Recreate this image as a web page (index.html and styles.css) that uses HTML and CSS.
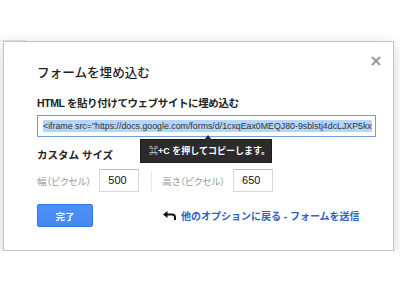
FILE: index.html
```html
<!DOCTYPE html>
<html>

<head>
    <title>フォームを埋め込む</title>
    <link rel="stylesheet" href="styles.css">
</head>

<body>
    <div class="page_line"></div>
    <div class="dialog">
        <span class="close">
            <svg width="10" height="10" viewBox="0 0 10 10">
                <path d="M1 1 L9 9 M9 1 L1 9" stroke="#999" stroke-width="2"/>
            </svg>
        </span>
        <div class="title">フォームを埋め込む</div>

        <div class="heading">HTML を貼り付けてウェブサイトに埋め込む</div>
        <div class="code_wrap">
            <div class="code_box">
                <span class="selected">&lt;iframe src="https://docs.google.com/forms/d/1cxqEax0MEQJ80-9sblstj4dcLJXP5kx</span>
            </div>
            <div class="tip">⌘+C を押してコピーします。</div>
        </div>

        <div class="heading size_head">カスタム サイズ</div>
        <div class="size_row">
            <label class="size_label">幅（ピクセル）</label>
            <div class="num_box">500</div>
            <div class="sep"></div>
            <label class="size_label">高さ（ピクセル）</label>
            <div class="num_box">650</div>
        </div>

        <div class="footer">
            <button class="done">完了</button>
            <a class="back" href="#">
                <svg width="13" height="9" viewBox="0 0 13 9">
                    <polygon points="0,3.5 4.5,0 4.5,7" fill="#111"/>
                    <path d="M3 3.5 H9 Q12 3.5 12 6.5 V9" stroke="#111" stroke-width="2" fill="none"/>
                </svg>
                <span>他のオプションに戻る - フォームを送信</span>
            </a>
        </div>
    </div>
</body>

</html>
```

FILE: styles.css
```css
body {
    margin: 0;
    background: #fff;
    font-family: "Liberation Sans", "Noto Sans CJK JP", sans-serif;
    color: #222;
}

.page_line {
    width: 26px;
    height: 40px;
    border-bottom: 1px solid #e6e6e6;
}

.dialog {
    position: relative;
    width: 391px;
    margin-left: 3px;
    box-sizing: border-box;
    border: 1px solid #c4c4c4;
    padding: 23px 17px 23px 33px;
    box-shadow: 0 4px 14px rgba(0, 0, 0, 0.18);
    background: #fff;
}

.close {
    position: absolute;
    top: 14px;
    right: 12px;
    line-height: 0;
}

.title {
    font-size: 12.6px;
    line-height: 16px;
    font-weight: 500;
}

.heading {
    margin-top: 15px;
    font-size: 10.5px;
    line-height: 14px;
    font-weight: bold;
    letter-spacing: -0.4px;
}

.code_wrap {
    position: relative;
    margin-top: 5px;
}

.code_box {
    height: 22px;
    box-sizing: border-box;
    border: 1px solid #6b9cf0;
    padding: 0 6px 0 5px;
    overflow: hidden;
    white-space: nowrap;
    font-size: 8.8px;
    line-height: 20px;
    color: #333;
}

.selected {
    background: #b5d5fb;
    padding: 1px 0;
}

.tip {
    position: absolute;
    top: 24px;
    left: 103px;
    width: 132px;
    height: 24px;
    box-sizing: border-box;
    padding-left: 8px;
    background: #2b2b2b;
    border: 1px solid #1c1c1c;
    color: #fff;
    font-size: 9px;
    font-weight: bold;
    line-height: 22px;
    white-space: nowrap;
}

.tip:before {
    content: "";
    position: absolute;
    top: -5px;
    left: 63px;
    border-left: 4px solid transparent;
    border-right: 4px solid transparent;
    border-bottom: 5px solid #2b2b2b;
}

.size_head {
    margin-top: 11px;
    letter-spacing: 0;
}

.size_row {
    display: flex;
    align-items: center;
    margin-top: 7px;
}

.size_label {
    font-size: 9.5px;
    color: #999;
    font-feature-settings: "palt";
}

.num_box {
    width: 40px;
    height: 23px;
    box-sizing: border-box;
    margin-left: 8px;
    border: 1px solid #d9d9d9;
    border-top-color: #c0c0c0;
    border-radius: 1px;
    padding-left: 8px;
    font-size: 11px;
    line-height: 21px;
    color: #111;
}

.sep {
    width: 1px;
    height: 20px;
    margin: 0 10px 0 12px;
    background: #e5e5e5;
}

.footer {
    display: flex;
    align-items: center;
    margin-top: 12px;
}

.done {
    width: 56px;
    height: 23px;
    padding: 0;
    border: 1px solid #3079ed;
    border-radius: 2px;
    background: linear-gradient(#4d90fe, #4787ed);
    color: #fff;
    font-family: inherit;
    font-size: 9.5px;
    font-weight: bold;
}

.back {
    display: flex;
    align-items: center;
    margin-left: 70px;
    text-decoration: none;
    color: #2d62c5;
    font-size: 10px;
    font-weight: bold;
}

.back svg {
    margin-right: 5px;
}
```
